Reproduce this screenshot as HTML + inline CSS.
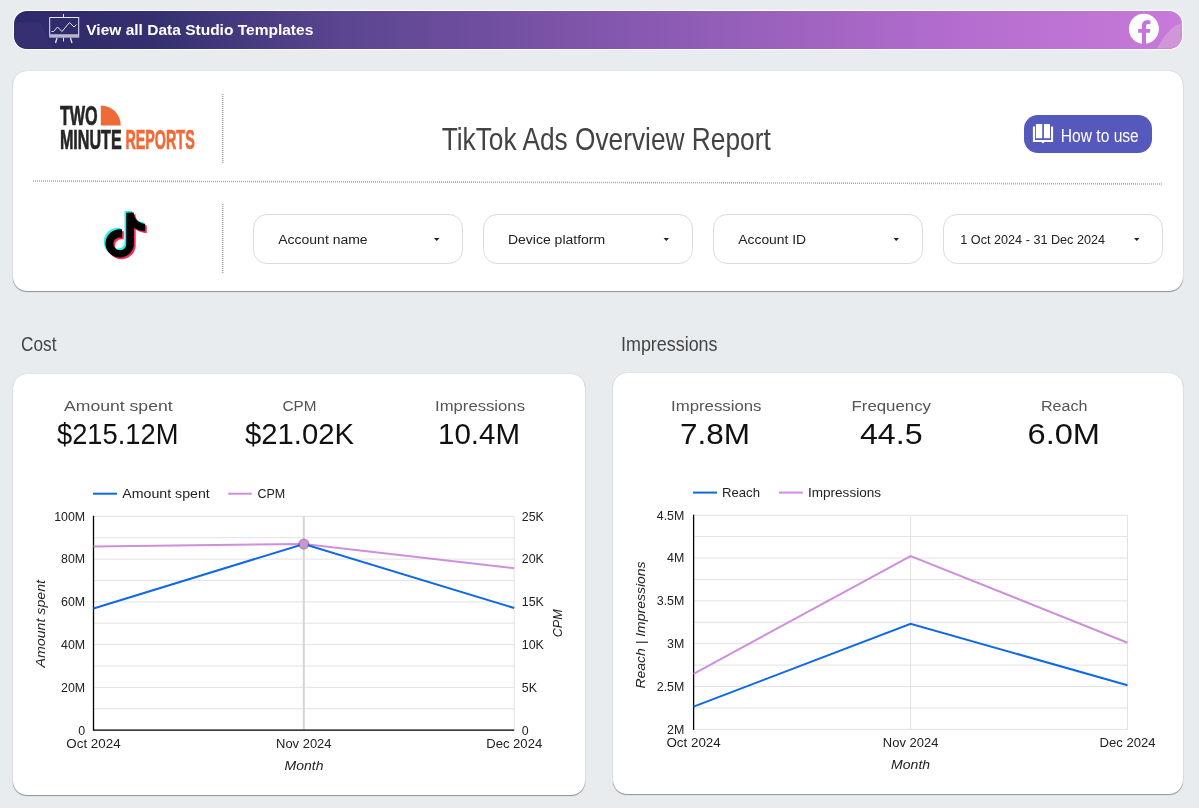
<!DOCTYPE html>
<html><head><meta charset="utf-8">
<style>
html,body{margin:0;padding:0;}
body{width:1199px;height:808px;overflow:hidden;position:relative;background:#e9ecef;font-family:"Liberation Sans",sans-serif;}
.abs{position:absolute;}
#bar{left:14px;top:11px;width:1168px;height:38px;border-radius:13px;background:linear-gradient(90deg,#2d2a6b 0%,#34306f 12%,#5a4590 28%,#8a5ab2 55%,#b36ccd 80%,#c77ad9 100%);box-shadow:0 0 0 1px #fff;overflow:hidden;}
.card{background:#fff;border-radius:14px;box-shadow:0 1px 1px rgba(0,0,0,.38),0 0 1px rgba(0,0,0,.25);}
#hdr{left:13px;top:71px;width:1170px;height:220px;}
#c1{left:13px;top:374px;width:572px;height:421px;}
#c2{left:613px;top:373px;width:570px;height:421px;}
.dd{top:214px;height:48px;border:1px solid #dadce0;border-radius:14px;background:#fff;}
#btn{left:1024px;top:115px;width:128px;height:38px;border-radius:14px;background:#5559bb;}
svg{position:absolute;left:0;top:0;will-change:transform;}
text{font-family:"Liberation Sans",sans-serif;}
</style></head>
<body>
<div id="bar" class="abs"></div>
<div id="hdr" class="abs card"></div>
<div id="c1" class="abs card"></div>
<div id="c2" class="abs card"></div>
<div class="abs dd" style="left:253px;width:208px;"></div>
<div class="abs dd" style="left:483px;width:208px;"></div>
<div class="abs dd" style="left:713px;width:208px;"></div>
<div class="abs dd" style="left:943px;width:218px;"></div>
<div id="btn" class="abs"></div>
<svg width="1199" height="808" viewBox="0 0 1199 808">
<!-- header graphics -->
<g stroke="#a9a9a9" stroke-width="1.6" stroke-dasharray="1 1">
<line x1="33" y1="181" x2="1162.5" y2="184"/>
<line x1="222.7" y1="94" x2="222.7" y2="163"/>
<line x1="222.7" y1="204" x2="222.7" y2="273"/>
</g>
<!-- logo -->
<g font-weight="bold" font-size="28" stroke-width="0.7">
<text x="59.9" y="125.1" fill="#252525" stroke="#252525" textLength="37.8" lengthAdjust="spacingAndGlyphs">TWO</text>
<text x="59.9" y="149.2" fill="#252525" stroke="#252525" textLength="61.8" lengthAdjust="spacingAndGlyphs">MINUTE</text>
<text x="125.4" y="149.2" fill="#f06a37" stroke="#f06a37" textLength="69.3" lengthAdjust="spacingAndGlyphs">REPORTS</text>
</g>
<path d="M100.8 125.4V105.4A20 20 0 0 1 120.8 125.4Z" fill="#f06a37"/>
<!-- tiktok -->
<g transform="translate(102.5 212.6) scale(1.9 1.87)">
<path fill="#25f4ee" transform="translate(-0.9 -0.9)" d="M12.525.02c1.31-.02 2.61-.01 3.91-.02.08 1.530.63 3.09 1.75 4.17 1.12 1.11 2.7 1.62 4.24 1.790v4.03c-1.44-.05-2.89-.35-4.2-.97-.57-.26-1.1-.59-1.62-.93-.01 2.92.01 5.84-.02 8.750-.08 1.4-.54 2.79-1.35 3.94-1.31 1.92-3.58 3.17-5.91 3.21-1.43.08-2.86-.31-4.08-1.03-2.02-1.19-3.44-3.37-3.65-5.71-.02-.5-.03-1-.01-1.49.18-1.9 1.12-3.72 2.58-4.96 1.66-1.44 3.98-2.13 6.15-1.72.02 1.48-.04 2.96-.04 4.44-.99-.32-2.150-.23-3.02.37-.63.41-1.11 1.04-1.36 1.75-.21.51-.15 1.07-.14 1.61.24 1.64 1.82 3.02 3.5 2.87 1.12-.01 2.19-.66 2.77-1.61.19-.33.4-.67.41-1.060.1-1.79.06-3.57.07-5.36.01-4.03-.01-8.05.02-12.07z"/>
<path fill="#fe2c55" transform="translate(0.9 0.9)" d="M12.525.02c1.31-.02 2.61-.01 3.91-.02.08 1.530.63 3.09 1.75 4.17 1.12 1.11 2.7 1.62 4.24 1.790v4.03c-1.44-.05-2.89-.35-4.2-.97-.57-.26-1.1-.59-1.62-.93-.01 2.92.01 5.84-.02 8.750-.08 1.4-.54 2.79-1.35 3.94-1.31 1.920-3.58 3.17-5.91 3.21-1.43.08-2.86-.31-4.08-1.03-2.02-1.19-3.44-3.37-3.65-5.71-.02-.5-.03-1-.01-1.49.18-1.9 1.12-3.72 2.58-4.96 1.66-1.44 3.98-2.13 6.15-1.72.02 1.48-.04 2.96-.04 4.44-.99-.32-2.15-.23-3.02.37-.63.41-1.11 1.04-1.36 1.75-.21.51-.15 1.07-.14 1.61.24 1.64 1.82 3.02 3.5 2.87 1.12-.01 2.19-.66 2.77-1.61.19-.33.4-.67.41-1.06.1-1.79.06-3.57.07-5.36.01-4.03-.01-8.05.02-12.07z"/>
<path fill="#000" d="M12.525.02c1.31-.02 2.61-.01 3.91-.02.08 1.53.63 3.09 1.75 4.17 1.12 1.11 2.7 1.62 4.24 1.79v4.03c-1.44-.05-2.89-.35-4.2-.97-.57-.26-1.1-.59-1.62-.93-.01 2.92.01 5.84-.02 8.75-.08 1.4-.54 2.79-1.350 3.94-1.31 1.92-3.58 3.17-5.91 3.21-1.43.08-2.86-.31-4.08-1.03-2.02-1.19-3.44-3.37-3.65-5.71-.02-.5-.03-1-.01-1.49.18-1.9 1.12-3.72 2.58-4.96 1.66-1.44 3.98-2.13 6.15-1.72.02 1.48-.04 2.96-.04 4.44-.99-.32-2.15-.23-3.02.37-.63.41-1.11 1.04-1.36 1.75-.21.51-.15 1.07-.14 1.61.24 1.64 1.82 3.02 3.5 2.87 1.12-.01 2.19-.66 2.77-1.61.19-.33.4-.67.41-1.06.1-1.79.06-3.57.07-5.36.01-4.03-.01-8.05.02-12.07z"/>
</g>
<!-- book icon -->
<g fill="#fff">
<path d="M1035.9 124.1h6.3v14.1h-6.3z M1043.9 124.1h6.1v14.1h-6.1z"/>
<path d="M1032.9 126.5h2.1v13.5h16v-13.5h2.1v15.5h-8.6l-1.5 1.5l-1.5-1.5h-8.6z"/>
</g>
<path d="M14.5 22.5H40C45 30 50 42 53.5 48.5H26A12 12 0 0 1 14.5 36.5Z" fill="#363071"/>
<!-- easel icon -->
<g fill="none" stroke="#e6e4ef" stroke-width="1">
<rect x="49.7" y="17.5" width="29" height="17.5"/>
<line x1="63.5" y1="14" x2="63.5" y2="17.5"/>
<polyline points="51.5,31.5 53.5,31.5 57.5,27 62,31.5 69.5,22.5 74,27 76.5,24.5"/>
<line x1="57" y1="38" x2="55.5" y2="43" stroke-width="1.3"/>
<line x1="70.5" y1="38" x2="72" y2="43" stroke-width="1.3"/>
<line x1="63.5" y1="37.5" x2="63.5" y2="41.5"/>
</g>
<rect x="49.2" y="34.7" width="30" height="3" fill="#b9b5cf"/>
<!-- fb -->
<path d="M1181.5 23 C1172 25 1163 37 1157 48.5 H1170 A12.5 12.5 0 0 0 1181.5 36Z" fill="#d196da"/>
<circle cx="1143.9" cy="28.85" r="15" fill="#fff"/>
<path d="M1141.9 43.9V32.8h-3.8v-3.8h3.8v-3.2c0-3.5 2.2-5.5 5.2-5.5 1.4 0 2.7.2 3.3.3v3.5h-2c-1.6 0-2.4.8-2.4 2v2.9h4.3l-.3 3.8h-4v11.1z" fill="#c674dc"/>
<!-- top bar text -->
<text x="86.3" y="34.8" font-size="14.5" font-weight="bold" fill="#fff" textLength="227" lengthAdjust="spacingAndGlyphs">View all Data Studio Templates</text>
<!-- title -->
<text x="441.7" y="149.8" font-size="31.2" fill="#434343" textLength="329" lengthAdjust="spacingAndGlyphs">TikTok Ads Overview Report</text>
<text x="1060.8" y="142" font-size="18.7" fill="#fff" textLength="78" lengthAdjust="spacingAndGlyphs">How to use</text>
<!-- filters -->
<g font-size="12.5" fill="#202124">
<text x="278.3" y="244.1" textLength="89.3" lengthAdjust="spacingAndGlyphs">Account name</text>
<text x="507.9" y="244.1" textLength="97.3" lengthAdjust="spacingAndGlyphs">Device platform</text>
<text x="738.3" y="244.1" textLength="67.8" lengthAdjust="spacingAndGlyphs">Account ID</text>
<text x="960.3" y="243.7" textLength="144.8" lengthAdjust="spacingAndGlyphs">1 Oct 2024 - 31 Dec 2024</text>
</g>
<g fill="#202124">
<path d="M434 238l5.5 0l-2.75 3z"/>
<path d="M663.5 238l5.5 0l-2.75 3z"/>
<path d="M893.5 238l5.5 0l-2.75 3z"/>
<path d="M1134 238l5.5 0l-2.75 3z"/>
</g>
<!-- section labels -->
<text x="21" y="351" font-size="19.6" fill="#444" textLength="35.5" lengthAdjust="spacingAndGlyphs">Cost</text>
<text x="621" y="351" font-size="19.6" fill="#444" textLength="96.5" lengthAdjust="spacingAndGlyphs">Impressions</text>
<!-- scorecards -->
<g font-size="15.3" fill="#555">
<text x="64" y="411" textLength="108.6" lengthAdjust="spacingAndGlyphs">Amount spent</text>
<text x="282.5" y="411" textLength="34" lengthAdjust="spacingAndGlyphs">CPM</text>
<text x="435" y="411" textLength="90" lengthAdjust="spacingAndGlyphs">Impressions</text>
<text x="671" y="411" textLength="90.5" lengthAdjust="spacingAndGlyphs">Impressions</text>
<text x="851.5" y="411" textLength="79.5" lengthAdjust="spacingAndGlyphs">Frequency</text>
<text x="1041" y="411" textLength="46.5" lengthAdjust="spacingAndGlyphs">Reach</text>
</g>
<g font-size="30" fill="#111">
<text x="57" y="444" textLength="121.4" lengthAdjust="spacingAndGlyphs">$215.12M</text>
<text x="245" y="444" textLength="109" lengthAdjust="spacingAndGlyphs">$21.02K</text>
<text x="438" y="444" textLength="82" lengthAdjust="spacingAndGlyphs">10.4M</text>
<text x="680" y="444" textLength="70" lengthAdjust="spacingAndGlyphs">7.8M</text>
<text x="860" y="444" textLength="62.5" lengthAdjust="spacingAndGlyphs">44.5</text>
<text x="1027.5" y="444" textLength="72.5" lengthAdjust="spacingAndGlyphs">6.0M</text>
</g>
<!-- charts -->
<g stroke="#e2e2e2" stroke-width="1"><line x1="93.5" y1="516.3" x2="514.2" y2="516.3"/><line x1="93.5" y1="537.7" x2="514.2" y2="537.7"/><line x1="93.5" y1="559.1" x2="514.2" y2="559.1"/><line x1="93.5" y1="580.5" x2="514.2" y2="580.5"/><line x1="93.5" y1="601.9" x2="514.2" y2="601.9"/><line x1="93.5" y1="623.2" x2="514.2" y2="623.2"/><line x1="93.5" y1="644.6" x2="514.2" y2="644.6"/><line x1="93.5" y1="666.0" x2="514.2" y2="666.0"/><line x1="93.5" y1="687.4" x2="514.2" y2="687.4"/><line x1="93.5" y1="708.8" x2="514.2" y2="708.8"/><line x1="93.5" y1="730.2" x2="514.2" y2="730.2"/><line x1="514.2" y1="516.3" x2="514.2" y2="730.2"/></g>
<line x1="303.8" y1="516.3" x2="303.8" y2="730.2" stroke="#d5d5d5" stroke-width="2"/>
<path d="M93.5 515.8V730.2H514.2" fill="none" stroke="#000" stroke-width="1.3"/>
<g font-size="12.4" fill="#222"><text x="85.2" y="520.6" text-anchor="end">100M</text><text x="521.8" y="520.6">25K</text><text x="85.2" y="563.4" text-anchor="end">80M</text><text x="521.8" y="563.4">20K</text><text x="85.2" y="606.2" text-anchor="end">60M</text><text x="521.8" y="606.2">15K</text><text x="85.2" y="648.9" text-anchor="end">40M</text><text x="521.8" y="648.9">10K</text><text x="85.2" y="691.7" text-anchor="end">20M</text><text x="521.8" y="691.7">5K</text><text x="85.2" y="734.5" text-anchor="end">0</text><text x="521.8" y="734.5">0</text><text x="93.5" y="748" text-anchor="middle" textLength="54.3" lengthAdjust="spacingAndGlyphs">Oct 2024</text><text x="303.8" y="748" text-anchor="middle" textLength="55.5" lengthAdjust="spacingAndGlyphs">Nov 2024</text><text x="514.2" y="748" text-anchor="middle" textLength="56" lengthAdjust="spacingAndGlyphs">Dec 2024</text></g>
<g font-size="12.4" font-style="italic" fill="#222">
<text x="304" y="769.9" text-anchor="middle" textLength="39" lengthAdjust="spacingAndGlyphs">Month</text>
<text transform="translate(44.6 623.7) rotate(-90)" text-anchor="middle" textLength="87.5" lengthAdjust="spacingAndGlyphs">Amount spent</text>
<text transform="translate(562.1 623.3) rotate(-90)" text-anchor="middle" textLength="28" lengthAdjust="spacingAndGlyphs">CPM</text>
</g>
<polyline points="93.5,546.6 303.8,544 514.2,568.3" fill="none" stroke="#cf8fdc" stroke-width="2"/>
<polyline points="93.5,608.5 303.8,544 514.2,608" fill="none" stroke="#1068e6" stroke-width="2"/>
<circle cx="303.8" cy="544" r="5.5" fill="#555" opacity=".55"/><circle cx="303.8" cy="544" r="4.3" fill="#cf8fdc"/>
<g font-size="12.6" fill="#222"><line x1="93" y1="493.7" x2="117" y2="493.7" stroke="#1068e6" stroke-width="2"/><text x="122.3" y="498" textLength="87.5" lengthAdjust="spacingAndGlyphs">Amount spent</text><line x1="228.3" y1="493.7" x2="251.7" y2="493.7" stroke="#cf8fdc" stroke-width="2"/><text x="257.5" y="498" textLength="27.8" lengthAdjust="spacingAndGlyphs">CPM</text></g>
<g stroke="#e2e2e2" stroke-width="1"><line x1="693.6" y1="515.2" x2="1127.5" y2="515.2"/><line x1="693.6" y1="536.6" x2="1127.5" y2="536.6"/><line x1="693.6" y1="558.0" x2="1127.5" y2="558.0"/><line x1="693.6" y1="579.5" x2="1127.5" y2="579.5"/><line x1="693.6" y1="600.9" x2="1127.5" y2="600.9"/><line x1="693.6" y1="622.3" x2="1127.5" y2="622.3"/><line x1="693.6" y1="643.7" x2="1127.5" y2="643.7"/><line x1="693.6" y1="665.1" x2="1127.5" y2="665.1"/><line x1="693.6" y1="686.6" x2="1127.5" y2="686.6"/><line x1="693.6" y1="708.0" x2="1127.5" y2="708.0"/><line x1="693.6" y1="729.4" x2="1127.5" y2="729.4"/><line x1="1127.5" y1="515.2" x2="1127.5" y2="729.4"/><line x1="910.6" y1="515.2" x2="910.6" y2="729.4"/></g>
<line x1="693.6" y1="514.7" x2="693.6" y2="729.9" stroke="#000" stroke-width="1.3"/>
<g font-size="12.4" fill="#222"><text x="684.3" y="519.5" text-anchor="end">4.5M</text><text x="684.3" y="562.3" text-anchor="end">4M</text><text x="684.3" y="605.2" text-anchor="end">3.5M</text><text x="684.3" y="648.0" text-anchor="end">3M</text><text x="684.3" y="690.9" text-anchor="end">2.5M</text><text x="684.3" y="733.7" text-anchor="end">2M</text><text x="693.6" y="746.9" text-anchor="middle" textLength="54.3" lengthAdjust="spacingAndGlyphs">Oct 2024</text><text x="910.6" y="746.9" text-anchor="middle" textLength="55.5" lengthAdjust="spacingAndGlyphs">Nov 2024</text><text x="1127.5" y="746.9" text-anchor="middle" textLength="56" lengthAdjust="spacingAndGlyphs">Dec 2024</text></g>
<g font-size="12.4" font-style="italic" fill="#222">
<text x="910.6" y="769" text-anchor="middle" textLength="39" lengthAdjust="spacingAndGlyphs">Month</text>
<text transform="translate(645.3 625) rotate(-90)" text-anchor="middle" textLength="127" lengthAdjust="spacingAndGlyphs">Reach | Impressions</text>
</g>
<polyline points="693.6,673.8 910.6,556 1127.5,642.7" fill="none" stroke="#cf8fdc" stroke-width="2"/>
<polyline points="693.6,706.6 910.6,623.7 1127.5,685.3" fill="none" stroke="#1068e6" stroke-width="2"/>
<g font-size="12.6" fill="#222"><line x1="693" y1="492.6" x2="717" y2="492.6" stroke="#1068e6" stroke-width="2"/><text x="722" y="497" textLength="38" lengthAdjust="spacingAndGlyphs">Reach</text><line x1="779" y1="492.6" x2="802.8" y2="492.6" stroke="#cf8fdc" stroke-width="2"/><text x="808" y="497" textLength="73" lengthAdjust="spacingAndGlyphs">Impressions</text></g>
</svg>
</body></html>
